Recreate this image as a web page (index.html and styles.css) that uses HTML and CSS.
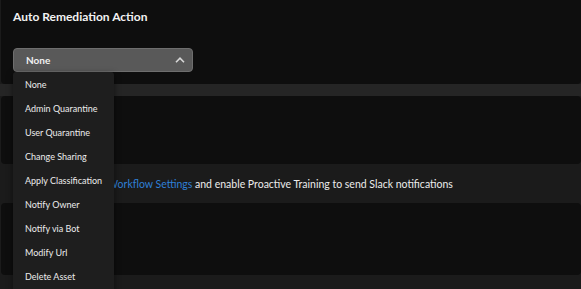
FILE: index.html
```html
<!DOCTYPE html>
<html lang="en">
<head>
  <meta charset="UTF-8">
  <meta name="viewport" content="width=device-width, initial-scale=1.0">
  <title>Auto Remediation Action</title>
  <link rel="stylesheet" href="styles.css">
</head>
<body>
  <div class="page">
    <section class="card card-top">
      <h2 class="card-title">Auto Remediation Action</h2>

      <div class="select-wrap">
        <div class="select">
          <span class="select-value">None</span>
          <svg class="chevron" width="10" height="6" viewBox="0 0 10 6">
            <path d="M1 5.2 L5 1.2 L9 5.2" fill="none" stroke="#d8d8d8" stroke-width="1.6"/>
          </svg>
        </div>

        <ul class="menu">
          <li>None</li>
          <li>Admin Quarantine</li>
          <li>User Quarantine</li>
          <li>Change Sharing</li>
          <li>Apply Classification</li>
          <li>Notify Owner</li>
          <li>Notify via Bot</li>
          <li>Modify Url</li>
          <li>Delete Asset</li>
        </ul>
      </div>
    </section>

    <div class="band"></div>

    <section class="card card-mid"></section>

    <div class="notice">
      <span>Go to the <a href="#">Workflow Settings</a> and enable Proactive Training to send Slack notifications</span>
    </div>

    <section class="card card-low"></section>

    <div class="notice notice-end"></div>
  </div>
</body>
</html>
```

FILE: styles.css
```css
body {
  margin: 0;
  background-color: #1b1b1b;
  font-family: 'Lato', 'Noto Sans', sans-serif;
  color: #e8e8e8;
  overflow: hidden;
}

.page {
  display: flex;
  flex-direction: column;
  height: 289px;
}

.card {
  background-color: #0e0e0e;
  margin-left: 1px;
  border-radius: 4px;
}

.card-top {
  height: 84px;
  padding: 0 12px;
  box-sizing: border-box;
  border-radius: 0 0 4px 4px;
}

.card-title {
  margin: 0;
  padding-top: 9px;
  font-size: 12px;
  font-weight: 700;
  color: #f2f2f2;
}

.select-wrap {
  position: relative;
  margin-top: 24px;
  width: 180px;
}

.select {
  display: flex;
  align-items: center;
  justify-content: space-between;
  height: 24px;
  padding: 0 7px 0 12px;
  background-color: #595959;
  border: 1px solid #6e6e6e;
  border-radius: 4px;
  box-sizing: border-box;
}

.select-value {
  font-size: 10px;
  font-weight: 700;
  color: #f0f0f0;
}

.chevron {
  display: block;
}

.menu {
  position: absolute;
  top: 24px;
  left: 0;
  width: 101px;
  height: 240px;
  margin: 0;
  padding: 1px 0 0;
  list-style: none;
  background-color: #1e1e1e;
  border-radius: 3px 3px 0 0;
  box-shadow: 0 2px 6px rgba(0, 0, 0, 0.5);
  z-index: 2;
}

.menu li {
  height: 24px;
  line-height: 24px;
  padding-left: 12px;
  font-size: 9px;
  color: #ececec;
  white-space: nowrap;
}

.band {
  height: 12px;
  background-color: #252525;
}

.card-mid {
  height: 68px;
}

.notice {
  height: 39px;
  display: flex;
  align-items: center;
  padding-left: 61px;
  font-size: 10.5px;
  color: #ececec;
}

.notice a {
  color: #2f7fd6;
  text-decoration: none;
}

.card-low {
  height: 72px;
}

.notice-end {
  flex: 1;
}
```
